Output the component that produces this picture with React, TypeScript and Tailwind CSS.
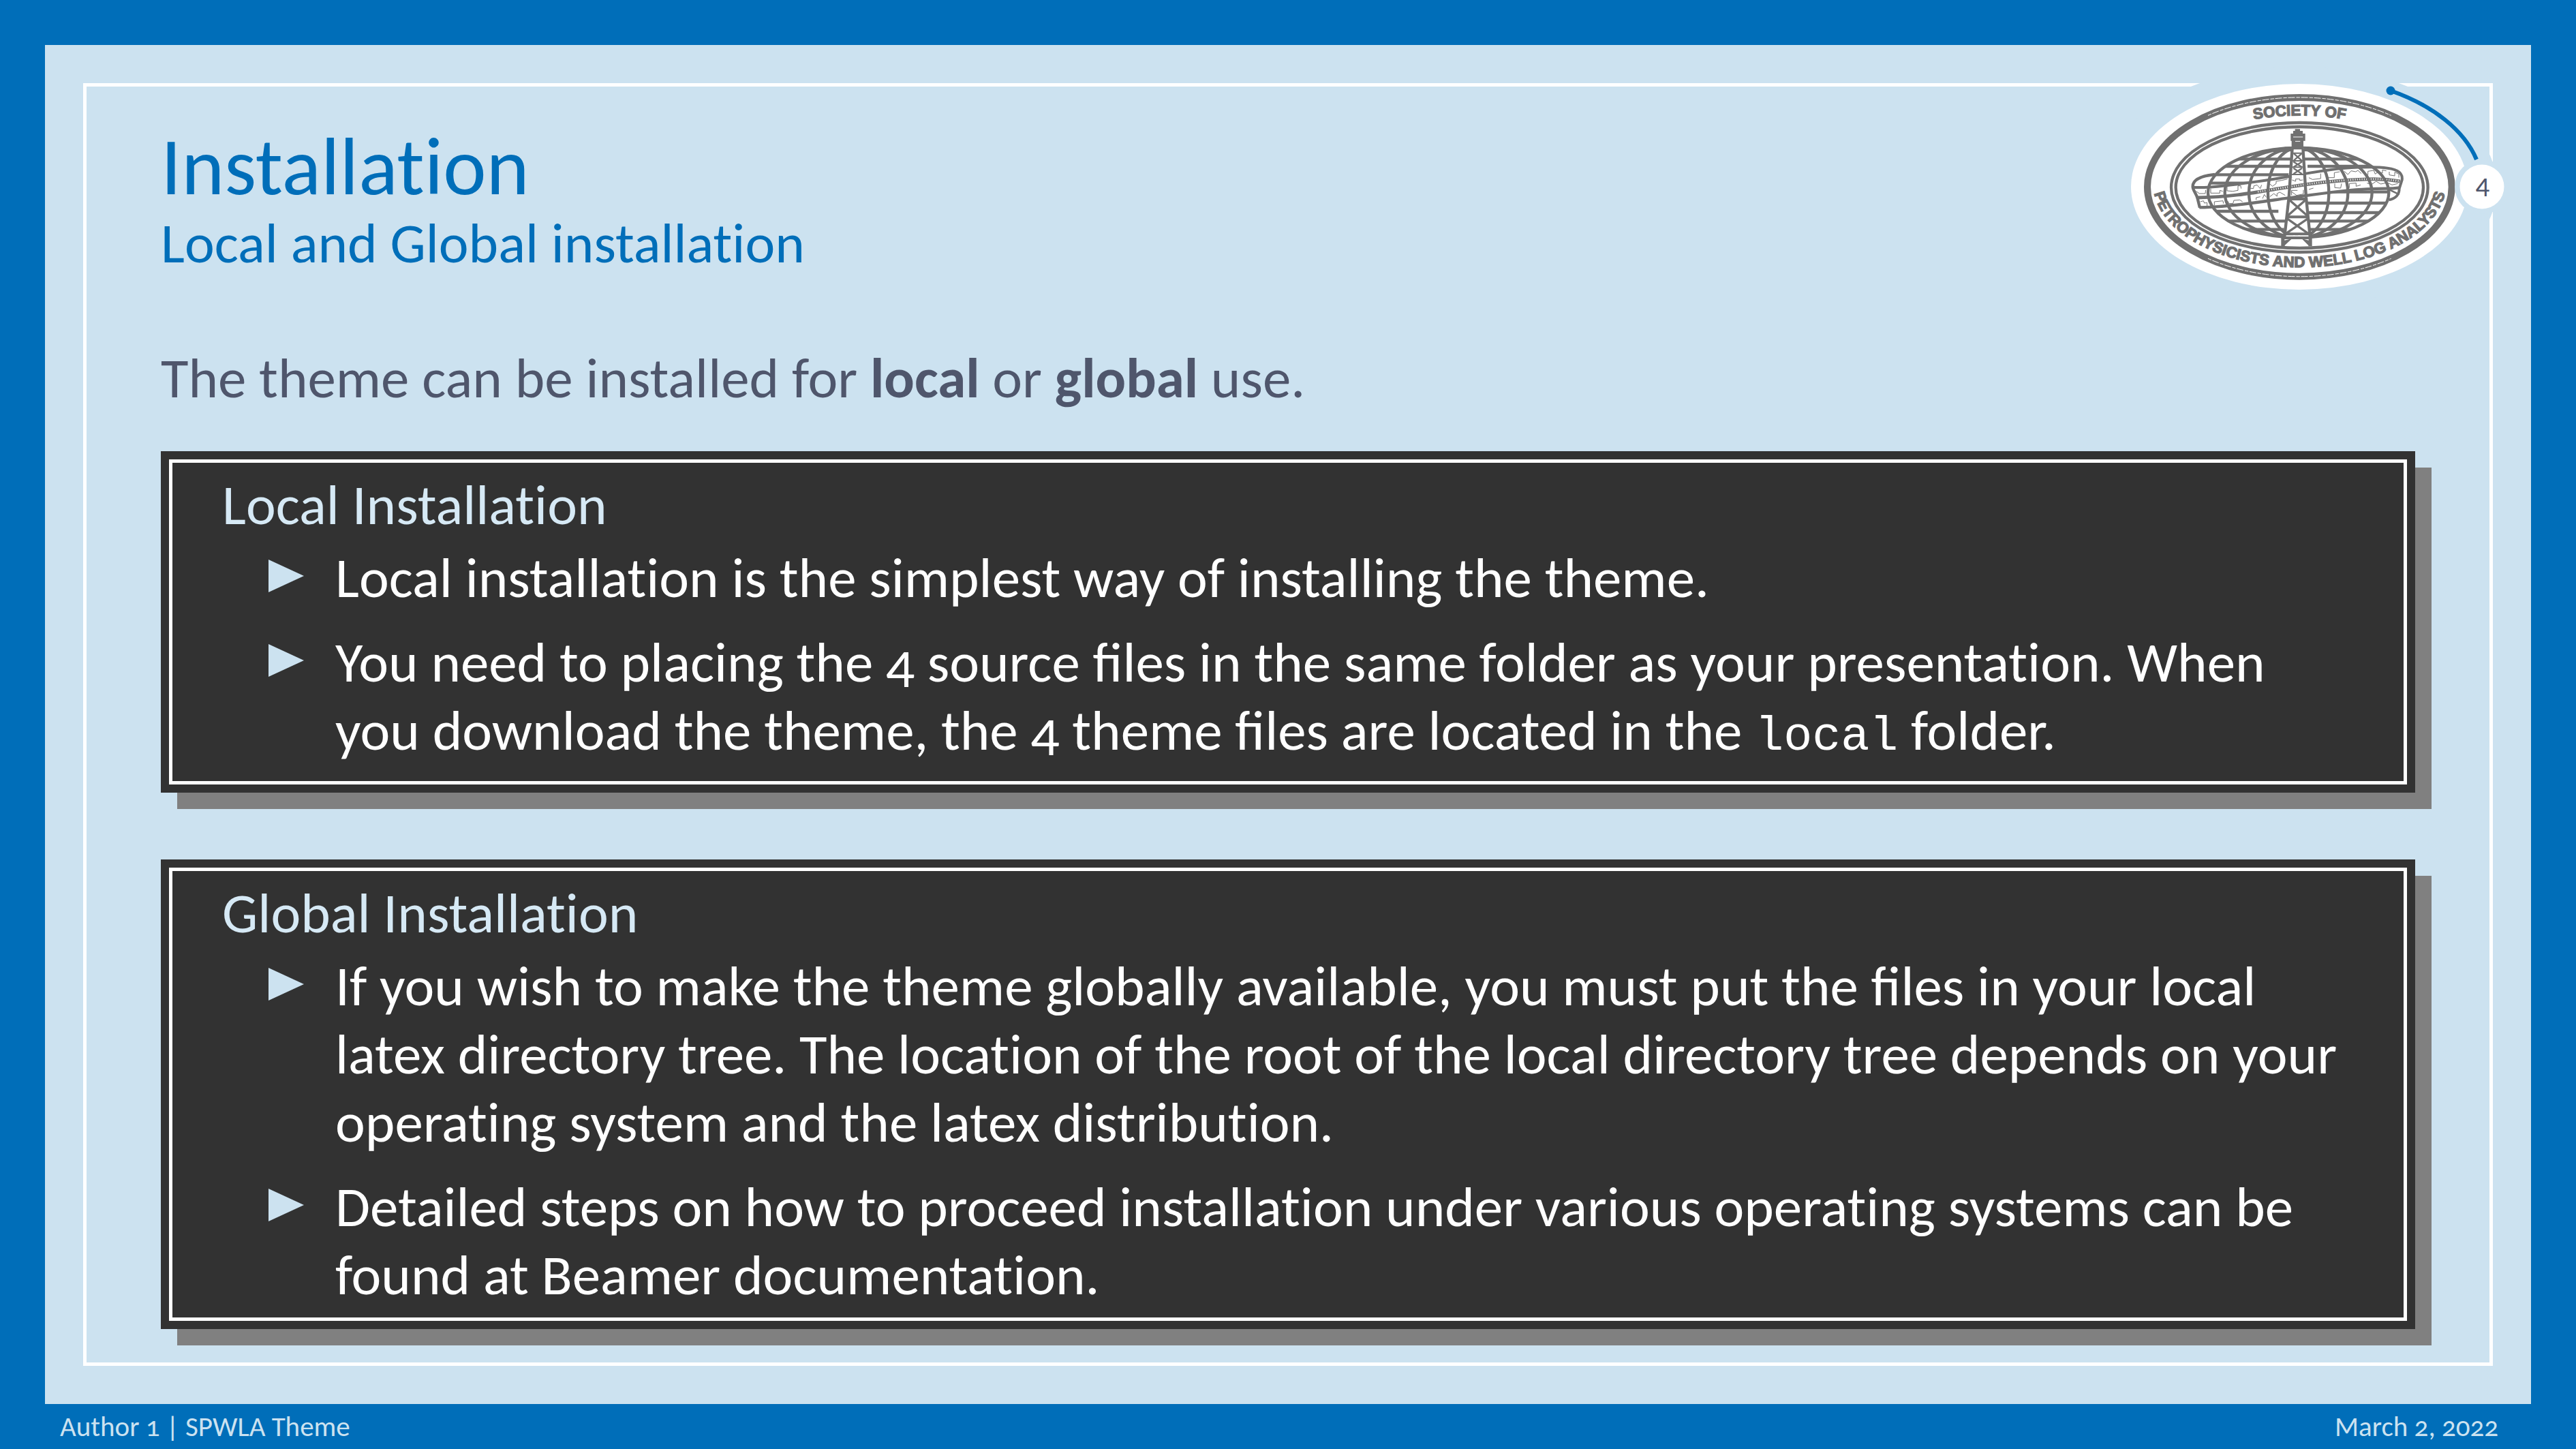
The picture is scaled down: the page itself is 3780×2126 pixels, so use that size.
import React from "react";

const GRAY = "#707070";

function SocietySeal() {
  return (
    <svg
      viewBox="0 0 634 366"
      className="absolute top-[14px] right-0 h-[366px] w-[634px]"
      role="img"
      aria-label="Society of Petrophysicists and Well Log Analysts, slide 4"
    >
      <defs>
        <path id="seal-top" d="M103 435 A600 317 0 0 1 1303 435" />
        <path id="seal-bottom" d="M58 415 A645 372 0 0 0 1348 415" />
        <clipPath id="seal-globe">
          <ellipse cx="698" cy="458" rx="400" ry="200" />
        </clipPath>
      </defs>

      <ellipse cx="294" cy="194" rx="290" ry="176" fill="#cce2f0" />
      <ellipse cx="294" cy="194" rx="247" ry="151" fill="#fff" />

      <g transform="translate(60 50) scale(0.33333)" fill="none" stroke={GRAY}>
        {/* Rings */}
        <ellipse cx="703" cy="433" rx="670" ry="394" strokeWidth="30" />
        <path
          d="M300 118 A670 394 0 0 1 1106 118 M300 748 A670 394 0 0 0 1106 748"
          stroke="#fff"
          strokeWidth="3"
          strokeDasharray="16 5 30 6"
        />
        <ellipse cx="703" cy="435" rx="565" ry="285" strokeWidth="13" />
        <ellipse cx="703" cy="435" rx="545" ry="267" strokeWidth="13" />

        {/* Lettering */}
        <g
          fill={GRAY}
          strokeWidth="4"
          fontFamily="'Liberation Sans', Arial, sans-serif"
          fontWeight="700"
          fontSize="67"
        >
          <text textAnchor="middle">
            <textPath href="#seal-top" startOffset="50%">SOCIETY OF</textPath>
          </text>
          <text textAnchor="middle">
            <textPath href="#seal-bottom" startOffset="50%">
              PETROPHYSICISTS AND WELL LOG ANALYSTS
            </textPath>
          </text>
        </g>

        {/* Globe parallels */}
        <g clipPath="url(#seal-globe)" strokeWidth="13">
          <path d="M300 310H1100 M300 342H662 M738 342H1100 M300 379H655 M300 416H590" />
          <path d="M735 455H1110 M735 504H1110 M300 540H610 M735 546H1110" />
          <path d="M300 583H640 M745 583H1110 M300 620H635 M745 620H1110" />
          <path d="M560 262 Q698 250 836 262 L800 275 Q698 262 600 275Z" fill={GRAY} />
          <path d="M480 640 Q560 655 640 655 M755 655 Q850 655 920 636" />
        </g>

        {/* Log strip around the globe */}
        <path
          d="M235 432 C300 440 420 425 560 402 S800 350 1000 348 C1100 344 1160 360 1156 400 L1142 440 C1000 436 900 446 740 470 S400 522 262 524 L252 482 Z"
          fill="#fff"
          stroke="none"
        />
        <path
          d="M330 378 C270 384 232 402 233 432 C234 450 248 460 254 484 L264 524"
          strokeWidth="13"
        />
        <path
          d="M233 434 C300 440 440 420 560 403 S780 360 900 350 C980 345 1060 346 1090 350 C1140 356 1158 376 1154 402 L1142 440 C1142 466 1130 482 1096 490"
          strokeWidth="12"
        />
        <path d="M262 523 C400 522 560 494 650 482 S900 446 1000 442 S1100 442 1142 436" strokeWidth="13" />
        <path d="M254 480 C400 476 480 462 600 442 S800 410 900 404 S1060 394 1145 408" strokeWidth="15" />
        <path
          d="M520 454 C640 436 760 414 880 405 S1060 394 1140 407"
          stroke="#fff"
          strokeWidth="8"
          strokeDasharray="3 7"
        />
        <path d="M1100 446 L1142 466" strokeWidth="8" />
        <path
          d="M248 452 L262 462 L288 462 L290 446 M312 440 V460 H352 V448 L365 452 M384 430 V450 L410 452 L432 448 V428 H444 L446 440 M480 438 L500 440 L502 428 L516 424 L530 440 L536 424 M566 414 L584 430 L600 418 V408 L625 404 L650 398 M670 402 L686 408 V398 H704 V404 L718 402 M744 392 L760 400 L796 396 V374 M828 392 H856 V370 L880 366 M900 364 L916 378 L930 362 L950 366 L960 360 L975 374 M1004 380 V364 L1030 360 L1036 376 L1050 366 L1068 372 V358 L1085 362 M1098 366 V380 L1122 384 V368 L1140 376 V392"
          strokeWidth="3"
        />
        <path
          d="M266 498 L280 494 L284 504 L296 502 V516 M328 514 V498 L366 494 L368 506 M388 496 L392 506 H410 L414 492 L440 490 L452 498 M512 490 V480 L530 476 M540 484 L548 466 L556 478 M572 476 L590 462 L604 474 V462 L616 456 L640 470 M668 470 V448 H694 M668 454 L690 470 L720 464 V446 M744 444 L764 438 M858 418 V436 L884 438 L888 418 M908 424 L922 436 V418 L952 416 V430 L972 424 M1000 416 L1020 422 L1040 408 L1060 420 L1090 414 L1110 424 L1136 418"
          strokeWidth="3"
        />

        {/* Globe outline and meridians */}
        <g strokeWidth="13">
          <ellipse cx="698" cy="458" rx="398" ry="197" />
          <ellipse cx="698" cy="458" rx="324" ry="197" />
          <ellipse cx="698" cy="458" rx="218" ry="197" />
          <ellipse cx="698" cy="458" rx="134" ry="197" />
        </g>

        {/* Derrick */}
        <path d="M668 262 H722 L728 390 L657 390 Z M655 488 H733 L752 692 H628 Z" fill="#fff" stroke="none" />
        <path d="M683 178H705V186H717V198H728V230H720V268H668V230H664V198H675V186H683Z" fill={GRAY} stroke="none" />
        <path d="M675 213H718 M684 232H706" stroke="#fff" strokeWidth="3" />
        <path d="M671 262 L656 480 L636 660 M718 262 L732 480 L750 660" strokeWidth="13" />
        <path d="M672 284H720 M668 318H722 M664 346H724 M662 378H726" strokeWidth="6" />
        <path d="M678 286 L712 316 M712 286 L678 316 M676 322 L714 346 M714 322 L676 346 M676 350 L714 376 M714 350 L676 376" strokeWidth="7" />
        <path d="M654 486H734 M646 565H742 M636 640H750 M632 657H752" strokeWidth="12" />
        <path d="M658 490 L738 560 M730 490 L650 560 M648 572 L744 640 M740 572 L640 640" strokeWidth="10" />
        <path d="M622 655H637V668L670 660 L638 690V694H622Z M758 655H743V668L712 660 L742 690V694H758Z" fill={GRAY} stroke="none" />
        <path d="M676 648H682 M698 648H704" stroke="#fff" strokeWidth="5" />
      </g>

      {/* Progress arc and slide number */}
      <path d="M428 53 A268 163 0 0 1 554 154" fill="none" stroke="#006eb9" strokeWidth="6" />
      <circle cx="428" cy="53" r="6.5" fill="#006eb9" />
      <circle cx="562" cy="194" r="40" fill="#cce2f0" />
      <circle cx="562" cy="194" r="32.5" fill="#fff" />
      <text
        x="563"
        y="208"
        textAnchor="middle"
        fontSize="41"
        fill="#4f566c"
        className="lining-nums"
      >
        4
      </text>
    </svg>
  );
}

function Item({ children }: { children: React.ReactNode }) {
  return (
    <li className="flex items-start gap-[46px]">
      <svg viewBox="0 0 52 48" className="mt-[23px] h-[48px] w-[52px] shrink-0" aria-hidden="true">
        <path d="M0 0 L52 24 L0 48Z" fill="#cce2f0" />
      </svg>
      <p>{children}</p>
    </li>
  );
}

function Block({
  title,
  className,
  children,
}: {
  title: string;
  className: string;
  children: React.ReactNode;
}) {
  return (
    <section className="bg-[#323232] p-3 shadow-[24px_24px_0_#808080]">
      <div className={`border-[5px] border-white px-[73px] pt-3 ${className}`}>
        <h3 className="text-[#d6e9f5]">{title}</h3>
        <ul className="mt-[7px] flex flex-col gap-6 pl-[68px] text-white">{children}</ul>
      </div>
    </section>
  );
}

export default function App() {
  return (
    <div className="flex min-h-screen flex-col bg-[#006eb9] px-[66px] pt-[66px] font-['Carlito','Lato',sans-serif] text-[83px] leading-[100px] oldstyle-nums [font-variant-ligatures:none]">
      <main className="relative flex flex-1 flex-col bg-[#cce2f0] p-14">
        <div className="flex-1 border-[5px] border-white px-[109px] pt-[57px]">
          <header className="text-[#006eb9]">
            <h1 className="text-[120px] leading-[120px]">Installation</h1>
            <h2 className="mt-[3px]">Local and Global installation</h2>
          </header>
          <p className="mt-[98px] text-[#4f566c]">
            The theme can be installed for <strong>local</strong> or <strong>global</strong> use.
          </p>
          <div className="mt-[57px] flex flex-col gap-[98px]">
            <Block title="Local Installation" className="pb-6">
              <Item>Local installation is the simplest way of installing the theme.</Item>
              <Item>
                You need to placing the 4 source{" "}
                <span className="[font-variant-ligatures:normal]">files</span> in the same folder as
                your presentation. When you download the theme, the 4 theme{" "}
                <span className="[font-variant-ligatures:normal]">files</span> are located in the{" "}
                <code className="font-['Liberation_Mono',monospace] text-[70px] leading-none">local</code>{" "}
                folder.
              </Item>
            </Block>
            <Block title="Global Installation" className="pb-3">
              <Item>
                If you wish to make the theme globally available, you must put the{" "}
                <span className="[font-variant-ligatures:normal]">files</span> in your local latex
                directory tree. The location of the root of the local directory tree depends on your
                operating system and the latex distribution.
              </Item>
              <Item>
                Detailed steps on how to proceed installation under various operating systems can be
                found at Beamer documentation.
              </Item>
            </Block>
          </div>
        </div>
        <SocietySeal />
      </main>
      <footer className="-mx-[66px] flex h-[66px] items-center justify-between pr-[114px] pl-[88px] text-[41px] leading-[64px] text-[#cce2f0]">
        <span>Author 1 | SPWLA Theme</span>
        <time dateTime="2022-03-02">March 2, 2022</time>
      </footer>
    </div>
  );
}
